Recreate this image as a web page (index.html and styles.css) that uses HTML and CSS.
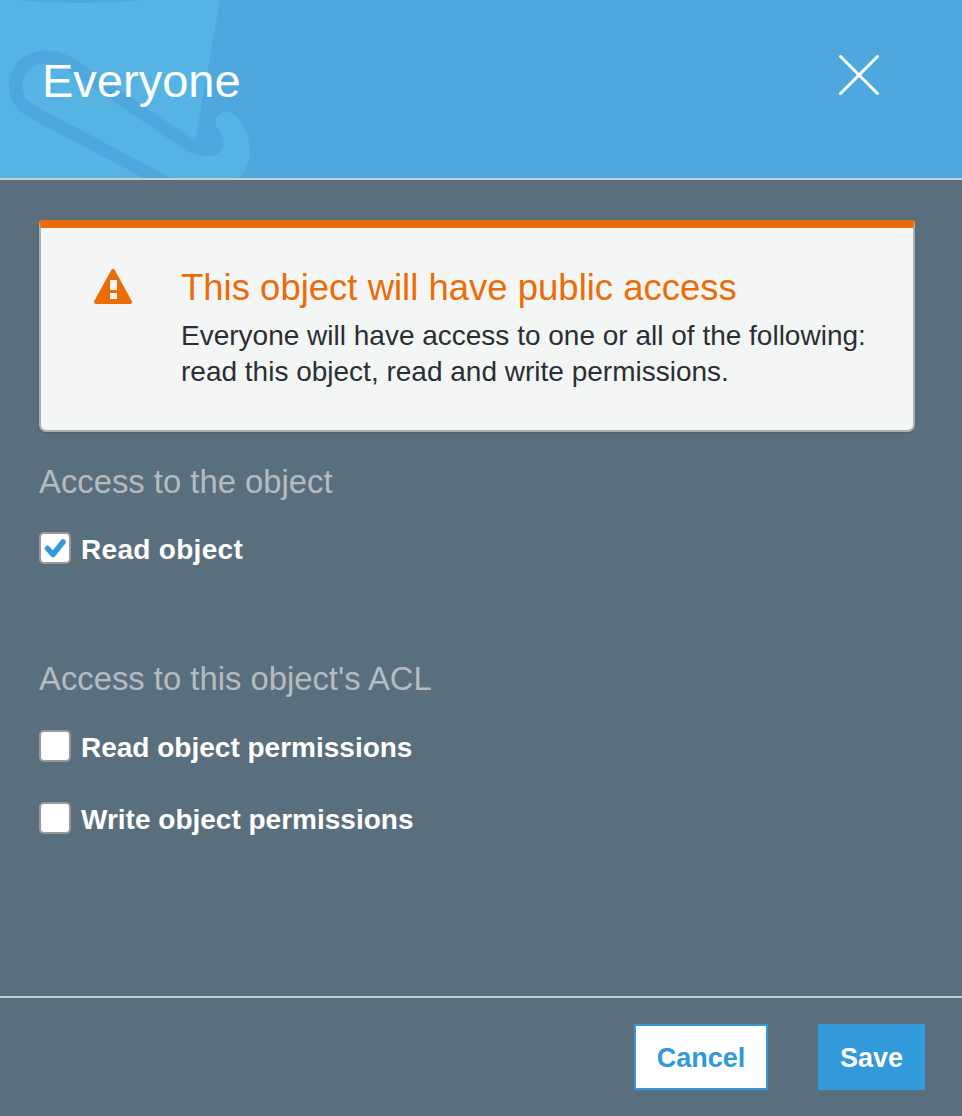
FILE: index.html
```html
<!DOCTYPE html>
<html lang="en">
<head>
<meta charset="utf-8">
<title>Everyone</title>
<link rel="stylesheet" href="styles.css">
</head>
<body>
<div class="modal">
  <header class="head">
    <svg class="art" width="300" height="178" viewBox="0 0 300 178" aria-hidden="true">
      <path class="art-light" d="M0 0H220L195 142L192 153C200 158 215 158 222 150C226 143 222 133 216 127C213 118 221 110 229 112C240 116 250 135 250 150C250 162 245 172 239 178H0Z"/>
      <path class="art-band" d="M180 190L29 110C5 95 15 57 45 57C55 57 62 59 70 64L194 148"/>
      <path class="art-cap" d="M17 0C50 4 110 4 143 0Z"/>
    </svg>
    <h1 class="title">Everyone</h1>
    <button class="close" aria-label="Close">
      <svg width="42" height="42" viewBox="0 0 42 42"><path d="M2.500 2.500L39.500 39.500M39.500 2.500L2.500 39.500"/></svg>
    </button>
  </header>

  <main class="main">
    <section class="alert">
      <svg class="alert-icon" width="38" height="36" viewBox="0 0 38 36" aria-hidden="true">
        <path class="tri" d="M19 3L36 34H2Z"/>
        <rect class="mark" x="16" y="12" width="7" height="10"/>
        <rect class="mark" x="16" y="25" width="7" height="6"/>
      </svg>
      <div class="alert-copy">
        <h2 class="alert-title">This object will have public access</h2>
        <p class="alert-text">Everyone will have access to one or all of the following: read this object, read and write permissions.</p>
      </div>
    </section>

    <section class="group group-first">
      <h3 class="group-title">Access to the object</h3>
      <label class="row row-single">
        <span class="box">
          <svg width="24" height="24" viewBox="0 0 24 24"><path d="M4.500 12.500L10 18.500L20 6"/></svg>
        </span>
        <span class="row-label">Read object</span>
      </label>
    </section>

    <section class="group group-second">
      <h3 class="group-title">Access to this object's ACL</h3>
      <label class="row"><span class="box"></span><span class="row-label">Read object permissions</span></label>
      <label class="row row-next"><span class="box"></span><span class="row-label">Write object permissions</span></label>
    </section>
  </main>

  <footer class="foot">
    <button class="btn btn-cancel">Cancel</button>
    <button class="btn btn-save">Save</button>
  </footer>
</div>
</body>
</html>
```

FILE: styles.css
```css
* { box-sizing: border-box; }
html, body { margin: 0; padding: 0; }
body {
  width: 962px;
  height: 1116px;
  overflow: hidden;
  background: #5a6f7d;
  font-family: "Liberation Sans", Arial, sans-serif;
}
.modal {
  height: 1116px;
  display: flex;
  flex-direction: column;
}
.head {
  position: relative;
  flex: 0 0 180px;
  display: flex;
  align-items: flex-start;
  justify-content: space-between;
  padding: 52px 82px 0 42px;
  background: #4fa8dd;
  border-bottom: 2px solid #ccc;
  overflow: hidden;
}
.art { position: absolute; left: 0; top: 0; }
.art-light { fill: #55b4e4; }
.art-band { fill: none; stroke: #4fa8dd; stroke-width: 13; }
.art-cap { fill: #4fa8dd; }
.title {
  position: relative;
  margin: 0;
  font-size: 47px;
  line-height: 58px;
  font-weight: 400;
  color: #fff;
}
.close {
  position: relative;
  width: 42px;
  height: 42px;
  margin-top: 2px;
  padding: 0;
  border: 0;
  background: none;
}
.close svg { display: block; }
.close path {
  fill: none;
  stroke: #fff;
  stroke-width: 3;
  stroke-linecap: round;
}
.main {
  flex: 1;
  padding: 40px 47px 0 39px;
}
.alert {
  display: flex;
  height: 212px;
  padding: 40px 0 0 53px;
  background: #f4f6f6;
  border-top: 8px solid #ec6c07;
  border-left: 2px solid #a9aeaf;
  border-right: 2px solid #a9aeaf;
  border-bottom: 2px solid #a9aeaf;
  border-radius: 2px 2px 7px 7px;
  box-shadow: 0 1px 2px rgba(0, 0, 0, .18);
}
.alert-icon { flex: 0 0 38px; }
.tri {
  fill: #ec6c07;
  stroke: #ec6c07;
  stroke-width: 4;
  stroke-linejoin: round;
}
.mark { fill: #f4f6f6; }
.alert-copy { margin-left: 49px; }
.alert-title {
  margin: 0;
  font-size: 36.500px;
  line-height: 40px;
  font-weight: 400;
  color: #ec6c07;
}
.alert-text {
  margin: 10px 0 0;
  width: 700px;
  font-size: 28px;
  line-height: 36px;
  color: #2b2f33;
}
.group-first { margin-top: 28px; }
.group-second { margin-top: 89px; }
.group-title {
  margin: 0;
  font-size: 32.800px;
  line-height: 44px;
  font-weight: 400;
  color: #b4bcc0;
}
.row {
  display: flex;
  align-items: center;
  gap: 10px;
  margin-top: 25px;
  height: 40px;
  font-size: 28px;
  font-weight: 700;
  color: #fff;
}
.row-single { margin-top: 24px; }
.row-single .row-label { letter-spacing: .3px; }
.row-label { padding-top: 3px; }
.row-next { margin-top: 32px; }
.box {
  flex: 0 0 32px;
  width: 32px;
  height: 32px;
  display: flex;
  align-items: center;
  justify-content: center;
  background: #fff;
  border: 2px solid #999;
  border-radius: 5px;
}
.box path {
  fill: none;
  stroke: #3299db;
  stroke-width: 5.500;
  stroke-linecap: round;
  stroke-linejoin: round;
}
.foot {
  flex: 0 0 120px;
  display: flex;
  justify-content: flex-end;
  align-items: flex-start;
  gap: 50px;
  padding: 26px 37px 0 0;
  border-top: 2px solid #ccc;
}
.btn {
  height: 66px;
  padding: 2px 0 0;
  font-family: inherit;
  font-size: 27px;
  font-weight: 700;
  border: 2px solid #3299db;
}
.btn-cancel { width: 134px; background: #fff; color: #3299db; }
.btn-save { width: 107px; background: #3299db; color: #fff; }
```
